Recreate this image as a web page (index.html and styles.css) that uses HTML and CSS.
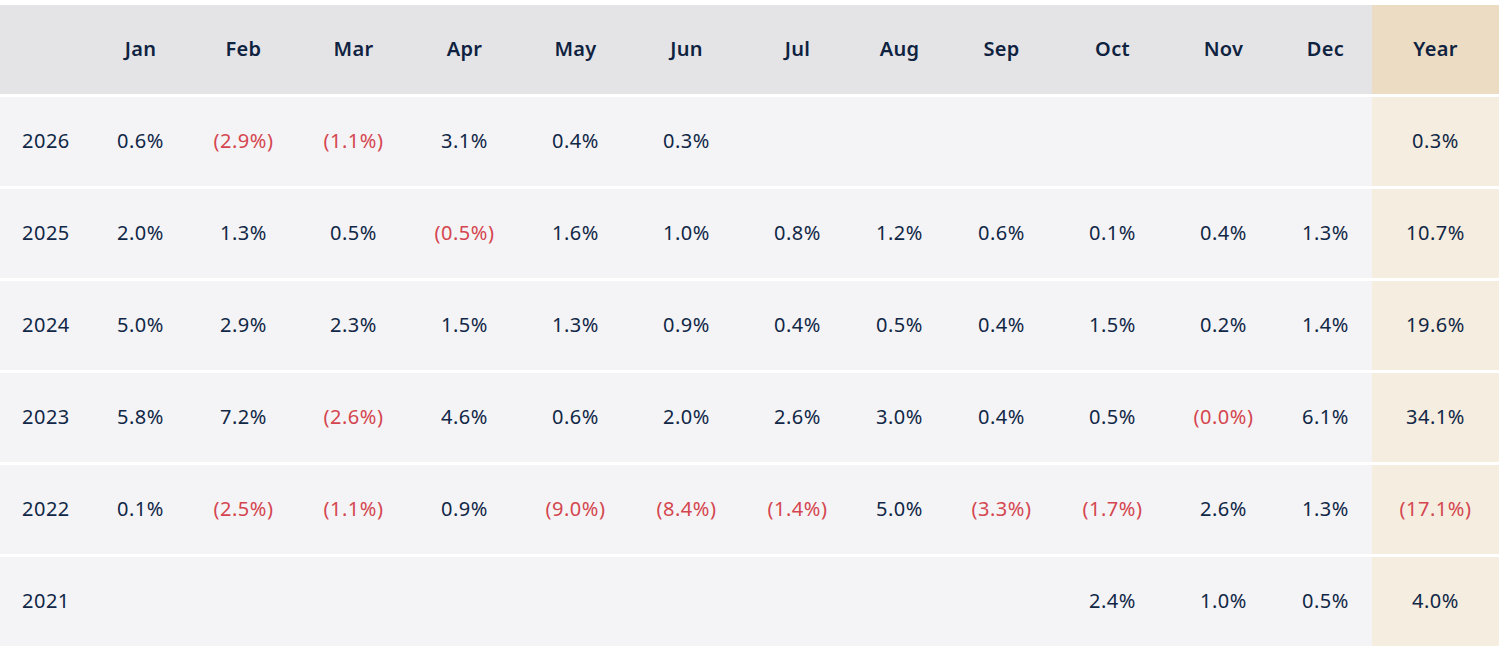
FILE: index.html
```html
<!DOCTYPE html>
<html lang="en">
<head>
<meta charset="utf-8">
<title>Monthly returns</title>
<link rel="stylesheet" href="styles.css">
</head>
<body>
<table class="returns">
  <colgroup>
    <col class="c-label"><col class="c-jan"><col class="c-feb"><col class="c-wide"><col class="c-wide"><col class="c-wide"><col class="c-wide"><col class="c-wide"><col class="c-narrow"><col class="c-wide"><col class="c-wide"><col class="c-wide"><col class="c-narrow"><col class="c-year">
  </colgroup>
  <thead>
    <tr>
      <th class="label"></th>
      <th>Jan</th><th>Feb</th><th>Mar</th><th>Apr</th><th>May</th><th>Jun</th><th>Jul</th><th>Aug</th><th>Sep</th><th>Oct</th><th>Nov</th><th>Dec</th>
      <th class="year">Year</th>
    </tr>
  </thead>
  <tbody>
    <tr>
      <td class="label">2026</td>
      <td>0.6%</td><td class="neg">(2.9%)</td><td class="neg">(1.1%)</td><td>3.1%</td><td>0.4%</td><td>0.3%</td><td></td><td></td><td></td><td></td><td></td><td></td>
      <td class="year">0.3%</td>
    </tr>
    <tr>
      <td class="label">2025</td>
      <td>2.0%</td><td>1.3%</td><td>0.5%</td><td class="neg">(0.5%)</td><td>1.6%</td><td>1.0%</td><td>0.8%</td><td>1.2%</td><td>0.6%</td><td>0.1%</td><td>0.4%</td><td>1.3%</td>
      <td class="year">10.7%</td>
    </tr>
    <tr>
      <td class="label">2024</td>
      <td>5.0%</td><td>2.9%</td><td>2.3%</td><td>1.5%</td><td>1.3%</td><td>0.9%</td><td>0.4%</td><td>0.5%</td><td>0.4%</td><td>1.5%</td><td>0.2%</td><td>1.4%</td>
      <td class="year">19.6%</td>
    </tr>
    <tr>
      <td class="label">2023</td>
      <td>5.8%</td><td>7.2%</td><td class="neg">(2.6%)</td><td>4.6%</td><td>0.6%</td><td>2.0%</td><td>2.6%</td><td>3.0%</td><td>0.4%</td><td>0.5%</td><td class="neg">(0.0%)</td><td>6.1%</td>
      <td class="year">34.1%</td>
    </tr>
    <tr>
      <td class="label">2022</td>
      <td>0.1%</td><td class="neg">(2.5%)</td><td class="neg">(1.1%)</td><td>0.9%</td><td class="neg">(9.0%)</td><td class="neg">(8.4%)</td><td class="neg">(1.4%)</td><td>5.0%</td><td class="neg">(3.3%)</td><td class="neg">(1.7%)</td><td>2.6%</td><td>1.3%</td>
      <td class="year neg">(17.1%)</td>
    </tr>
    <tr>
      <td class="label">2021</td>
      <td></td><td></td><td></td><td></td><td></td><td></td><td></td><td></td><td></td><td>2.4%</td><td>1.0%</td><td>0.5%</td>
      <td class="year">4.0%</td>
    </tr>
  </tbody>
</table>
</body>
</html>
```

FILE: styles.css
```css
html, body {
  margin: 0;
  padding: 0;
  background: #ffffff;
}

body {
  font-family: "Noto Sans", "Open Sans", sans-serif;
  color: #112746;
}

.returns {
  width: 1499px;
  table-layout: fixed;
  border-collapse: separate;
  border-spacing: 0 3px;
  margin-top: 2px;
  font-size: 20px;
}

.c-label { width: 92px; }
.c-jan { width: 97px; }
.c-feb { width: 109px; }
.c-wide { width: 111px; }
.c-narrow { width: 93px; }
.c-year { width: 127px; }

.returns tr {
  height: 89px;
}

.returns th,
.returns td {
  padding: 0 0 2px 0;
  text-align: center;
  vertical-align: middle;
  white-space: nowrap;
}

.returns th {
  background: #e4e4e7;
  font-weight: 600;
  color: #0f2240;
  letter-spacing: 0.3px;
}

.returns td {
  background: #f4f4f6;
  font-weight: 400;
  letter-spacing: 0.5px;
}

.returns .label {
  text-align: left;
  padding-left: 22px;
}

.returns th.year {
  background: #ecdcc3;
}

.returns td.year {
  background: #f5ede0;
}

.returns .neg {
  color: #d4464f;
}
```
